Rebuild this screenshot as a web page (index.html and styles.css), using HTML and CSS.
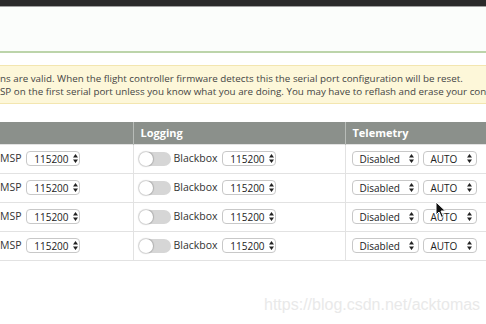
FILE: index.html
```html
<!DOCTYPE html>
<html lang="en">
<head>
    <meta charset="UTF-8">
    <title>Ports</title>
    <link rel="stylesheet" href="styles.css">
</head>
<body>
    <div class="topbar"></div>
    <div class="header-strip"></div>

    <div class="note">
        <p>ns are valid. When the flight controller firmware detects this the serial port configuration will be reset.</p>
        <p>SP on the first serial port unless you know what you are doing. You may have to reflash and erase your con</p>
    </div>

    <table class="ports">
        <thead>
            <tr>
                <th class="col-msp"></th>
                <th class="col-log">Logging</th>
                <th class="col-tel">Telemetry</th>
            </tr>
        </thead>
        <tbody id="portRows"></tbody>
    </table>

    <div class="watermark">https://blog.csdn.net/acktomas</div>
    <svg class="cursor" width="12" height="18" viewBox="0 0 12 18">
        <path d="M1 1 L1 14 L4 11 L6.5 16.5 L8.5 15.5 L6 10 L10.5 10 Z" fill="#111" stroke="#fff" stroke-width="1"/>
    </svg>

    <script>
        const arrows = '<svg class="arr" width="5" height="9" viewBox="0 0 5 9"><path d="M2.5 0 L5 3.5 L0 3.5 Z M2.5 9 L5 5.5 L0 5.5 Z" fill="#222"/></svg>';
        const sel = (text, cls) => `<span class="select ${cls}">${text}${arrows}</span>`;

        const rows = document.getElementById('portRows');
        for (let i = 0; i < 4; i++) {
            rows.innerHTML += `
                <tr>
                    <td class="col-msp">MSP ${sel('115200', 'baud')}</td>
                    <td class="col-log"><span class="toggle"><span class="knob"></span></span>Blackbox ${sel('115200', 'baud')}</td>
                    <td class="col-tel">${sel('Disabled', 'proto')}${sel('AUTO', 'auto')}</td>
                </tr>`;
        }
    </script>
</body>
</html>
```

FILE: styles.css
```css
* {
    box-sizing: border-box;
}

body {
    margin: 0;
    background: #fff;
    font-family: 'Open Sans', sans-serif;
    color: #333;
    width: 486px;
    height: 324px;
    overflow: hidden;
    position: relative;
}

.topbar {
    height: 7px;
    background: #2a2a2a;
    border-bottom: 1px solid #a0a0a0;
}

.header-strip {
    height: 46px;
    background: #fbfdfb;
    border-bottom: 2px solid #bcd4aa;
}

.note {
    margin-top: 12px;
    height: 39px;
    background: #fdf7d9;
    border-top: 1px solid #f3e6b0;
    border-bottom: 1px solid #f3e6b0;
    padding: 6px 0 0 0;
    white-space: nowrap;
    overflow: hidden;
}

.note p {
    margin: 0;
    font-size: 9.8px;
    line-height: 13px;
    color: #444;
}

.ports {
    margin-top: 18px;
    border-collapse: collapse;
    width: 500px;
    font-size: 10.5px;
}

.ports th {
    background: #8b908b;
    color: #fff;
    font-weight: 700;
    font-size: 11px;
    text-align: left;
    height: 22px;
    padding: 0 7px;
    border-right: 1px solid #b8bcb8;
}

.ports td {
    height: 29px;
    border-top: 1px solid #e2e2e2;
    border-bottom: 1px solid #e2e2e2;
    border-right: 1px solid #e2e2e2;
    white-space: nowrap;
    padding: 0 5px;
}

.col-msp {
    width: 133px;
}

.ports td.col-msp {
    padding-left: 0;
}

.col-log {
    width: 212px;
}

.ports td.col-tel {
    padding-left: 6px;
}

.select {
    display: inline-flex;
    align-items: center;
    justify-content: space-between;
    height: 15px;
    padding: 0 4px 0 7px;
    border: 1px solid #c8c8c8;
    border-radius: 4px;
    background: #fff;
    vertical-align: middle;
    font-size: 10px;
    color: #222;
}

.select .arr {
    flex-shrink: 0;
    margin-left: 4px;
}

.baud {
    width: 54px;
    margin-left: 2px;
    padding-right: 3px;
}

.proto {
    width: 67px;
}

.auto {
    width: 54px;
    margin-left: 4px;
}

.toggle {
    display: inline-block;
    width: 32px;
    height: 14px;
    border-radius: 7px;
    background: #d6d6d6;
    vertical-align: middle;
    margin-right: 3px;
    position: relative;
}

.knob {
    position: absolute;
    left: 0;
    top: 0;
    width: 14px;
    height: 14px;
    border-radius: 50%;
    background: #fff;
    box-shadow: 0 0 1px 1px rgba(0, 0, 0, 0.18);
}

.watermark {
    position: absolute;
    left: 264px;
    top: 296px;
    font-family: 'Liberation Sans', Arial, sans-serif;
    font-size: 16px;
    color: #e9e9e9;
}

.cursor {
    position: absolute;
    left: 435px;
    top: 201px;
}
```
